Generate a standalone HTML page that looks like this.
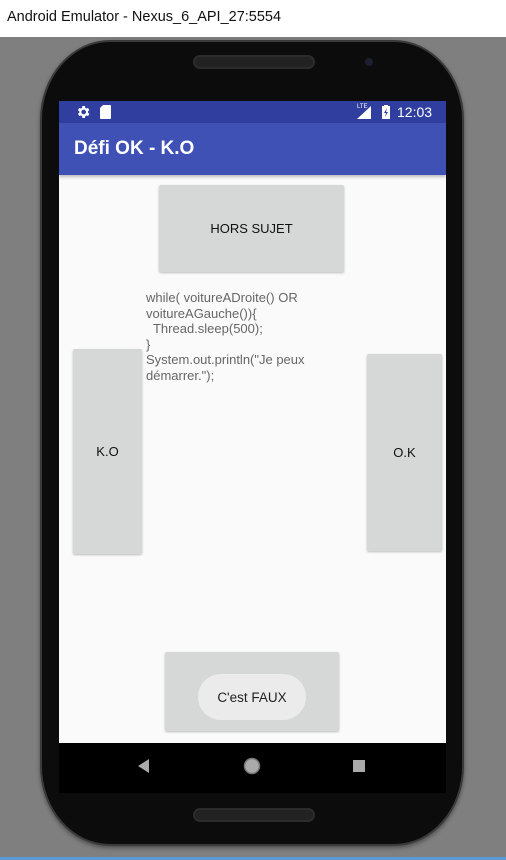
<!DOCTYPE html>
<html><head><meta charset="utf-8"><style>
*{margin:0;padding:0;box-sizing:border-box}
body{width:506px;height:860px;overflow:hidden;background:#7f7f7f;font-family:"Liberation Sans",sans-serif;position:relative}
.title{position:absolute;left:0;top:0;width:506px;height:37px;background:#fff;font-size:14.5px;color:#111;padding:9px 0 0 7px}
.phone{position:absolute;left:40px;top:40px;width:424px;height:806px;border-radius:70px/80px;background:#0c0c0c;border:2px solid #3a3a3a;box-shadow:0 2px 4px rgba(0,0,0,.4)}
.speaker{position:absolute;left:193px;top:55px;width:122px;height:14px;border-radius:8px;background:#222;border:2px solid #2c2c2c}
.speaker2{position:absolute;left:193px;top:808px;width:122px;height:14px;border-radius:8px;background:#222;border:2px solid #2c2c2c}
.cam{position:absolute;left:365px;top:58px;width:8px;height:8px;border-radius:50%;background:#1a2030}
.screen{position:absolute;left:59px;top:101px;width:387px;height:642px;background:#fafafa;overflow:hidden}
.sb{position:absolute;left:0;top:0;width:387px;height:22px;background:#303f9f;color:#fff}
.tb{position:absolute;left:0;top:22px;width:387px;height:52px;background:#3f51b5;color:#fff;font-size:19px;font-weight:bold;padding:15px 0 0 15px;box-shadow:0 2px 3px rgba(0,0,0,.25)}
.btn{position:absolute;background:#d6d7d7;box-shadow:0 1px 2px rgba(0,0,0,.25);border-radius:2px;font-size:13px;color:#111;display:flex;align-items:center;justify-content:center}
.code{position:absolute;left:87px;top:189px;font-size:13px;line-height:15.5px;color:#666;white-space:pre}
.toast{position:absolute;left:139px;top:573px;width:108px;height:46px;border-radius:23px;background:#ebebeb;font-size:13.5px;color:#222;display:flex;align-items:center;justify-content:center}
.nav{position:absolute;left:59px;top:743px;width:387px;height:50px;background:#000}
.bl{position:absolute;left:0;top:857px;width:506px;height:3px;background:#5b9bd5}
</style></head><body>
<div class="title">Android Emulator - Nexus_6_API_27:5554</div>
<div class="phone"></div>
<div class="speaker"></div><div class="cam"></div>
<div class="screen">
 <div class="sb">
  <svg style="position:absolute;left:16px;top:3px" width="16" height="16" viewBox="0 0 24 24"><path fill="#fff" d="M19.4 13a7.5 7.5 0 000-2l2.1-1.6-2-3.5-2.5 1a7 7 0 00-1.7-1L15 3h-4l-.4 2.9a7 7 0 00-1.7 1l-2.5-1-2 3.5L6.6 11a7.5 7.5 0 000 2l-2.1 1.6 2 3.5 2.5-1a7 7 0 001.7 1L11 21h4l.4-2.9a7 7 0 001.7-1l2.5 1 2-3.5zM13 15.5A3.5 3.5 0 1113 8.5a3.5 3.5 0 010 7z"/></svg>
  <svg style="position:absolute;left:41px;top:4px" width="11" height="14" viewBox="0 0 11 14"><path fill="#fff" d="M3 0h7a1 1 0 011 1v12a1 1 0 01-1 1H1a1 1 0 01-1-1V3z"/></svg>
  <span style="position:absolute;left:298px;top:3px;font-size:6px">LTE</span>
  <svg style="position:absolute;left:298px;top:5px" width="14" height="13"><path fill="#fff" d="M14 0v13H0z"/></svg>
  <svg style="position:absolute;left:323px;top:4px" width="8" height="14"><rect x="0" y="1" width="8" height="13" fill="#fff"/><rect x="2" y="0" width="4" height="2" fill="#fff"/><path d="M5 3L2 8h2l-1 4 3-5H4z" fill="#303f9f"/></svg>
  <span style="position:absolute;left:338px;top:3px;font-size:14px">12:03</span>
 </div>
 <div class="tb">Défi OK - K.O</div>
 <div class="btn" style="left:100px;top:84px;width:185px;height:87px">HORS SUJET</div>
 <div class="code">while( voitureADroite() OR
voitureAGauche()){
  Thread.sleep(500);
}
System.out.println("Je peux
démarrer.");</div>
 <div class="btn" style="left:14px;top:248px;width:69px;height:205px">K.O</div>
 <div class="btn" style="left:308px;top:253px;width:75px;height:197px">O.K</div>
 <div class="btn" style="left:106px;top:551px;width:174px;height:79px"></div>
 <div class="toast">C'est FAUX</div>
</div>
<div class="nav">
 <svg style="position:absolute;left:79px;top:16px" width="12" height="14"><path d="M11 0v14L0 7z" fill="#aaa"/></svg>
 <svg style="position:absolute;left:184px;top:14px" width="18" height="18"><circle cx="9" cy="9" r="7.5" fill="#aaa" stroke="#777" stroke-width="1.5"/></svg>
 <div style="position:absolute;left:294px;top:17px;width:12px;height:12px;background:#aaa"></div>
</div>
<div class="speaker2"></div>
<div class="bl"></div>
</body></html>
